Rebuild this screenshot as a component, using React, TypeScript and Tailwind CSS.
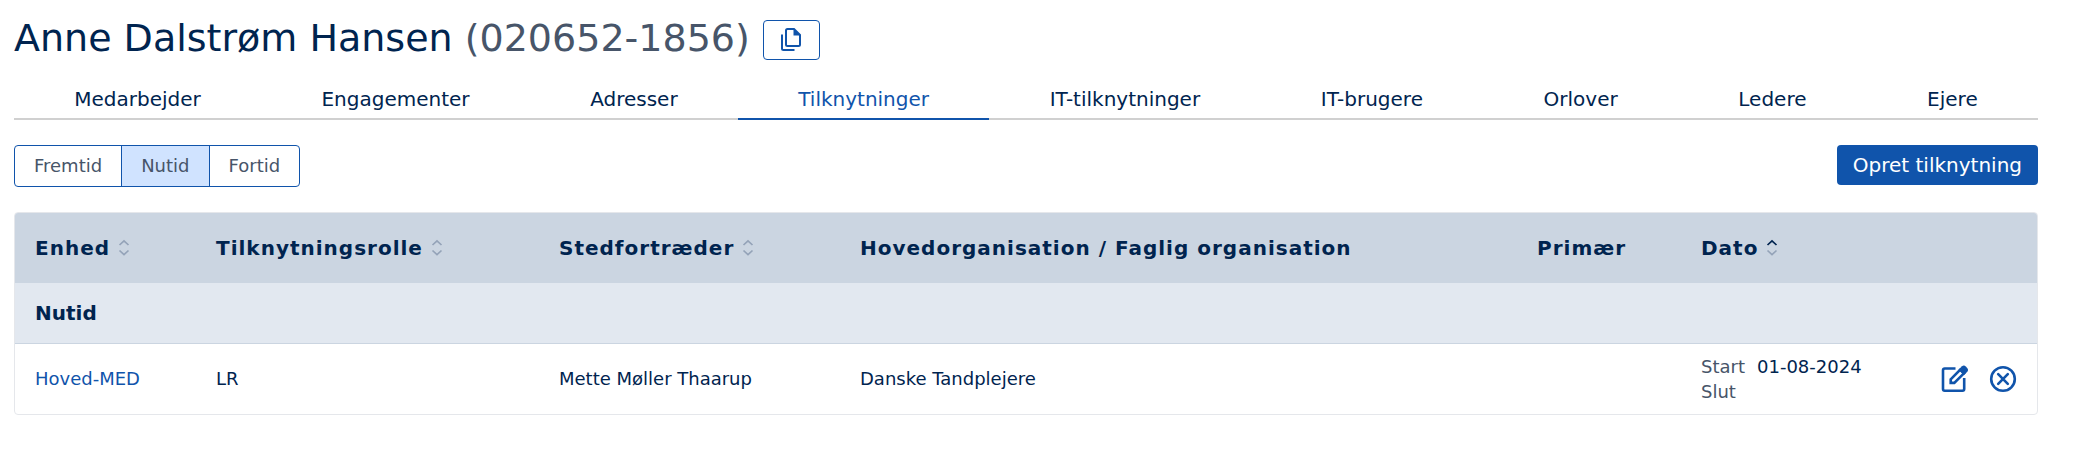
import React from "react";

const tabs = [
  "Medarbejder",
  "Engagementer",
  "Adresser",
  "Tilknytninger",
  "IT-tilknytninger",
  "IT-brugere",
  "Orlover",
  "Ledere",
  "Ejere",
];

const periods = ["Fremtid", "Nutid", "Fortid"];

type Sort = "none" | "asc";

const columns: { label: string; width: string; sort?: Sort }[] = [
  { label: "Enhed", width: "w-[181px]", sort: "none" },
  { label: "Tilknytningsrolle", width: "w-[343px]", sort: "none" },
  { label: "Stedfortræder", width: "w-[301px]", sort: "none" },
  { label: "Hovedorganisation / Faglig organisation", width: "" },
  { label: "Primær", width: "w-[164px]" },
  { label: "Dato", width: "w-[216px]", sort: "asc" },
];

function CopyIcon() {
  return (
    <svg width="20" height="24" viewBox="0 0 20 24" fill="none" stroke="currentColor" strokeWidth="2" aria-hidden="true">
      <path d="M5 2.500Q5 1 6.500 1H13L19 7V16.500Q19 18 17.500 18H6.500Q5 18 5 16.500Z" />
      <path d="M12.500 0.500V7.500H19.500Z" fill="currentColor" stroke="none" />
      <path d="M1 6.500V20.500Q1 22 2.500 22H13.500" />
    </svg>
  );
}

function SortIcon({ active }: { active: boolean }) {
  return (
    <svg width="12" height="18" viewBox="0 0 12 18" fill="none" strokeWidth="1.700" aria-hidden="true">
      <path d="M1.500 6L6 1.800L10.500 6" className={active ? "stroke-[#00244f]" : "stroke-[#94a3b8]"} />
      <path d="M1.500 11.500L6 15.700L10.500 11.500" className="stroke-[#94a3b8]" />
    </svg>
  );
}

function EditIcon() {
  return (
    <svg width="28" height="28" viewBox="0 0 28 28" fill="none" stroke="currentColor" strokeWidth="2.600" aria-hidden="true">
      <path d="M14.500 3.500H3.700Q2 3.500 2 5.200V24Q2 25.700 3.700 25.700H21.500Q23.200 25.700 23.200 24V13" />
      <path d="M9.700 14.300L19.300 4.700L22.900 8.300L13.300 17.900H9.700Z" />
      <path d="M17.500 4.700L21 1.300Q22.900 -0.200 24.800 1.500L26.200 2.900Q27.800 4.900 26.300 6.800L22.900 10.200Z" fill="currentColor" stroke="none" />
    </svg>
  );
}

function EndIcon() {
  return (
    <svg width="28" height="28" viewBox="0 0 28 28" fill="none" stroke="currentColor" strokeWidth="2.600" aria-hidden="true">
      <circle cx="14" cy="14" r="11.800" />
      <path d="M9.200 9.200L18.800 18.800M18.800 9.200L9.200 18.800" strokeLinecap="round" />
    </svg>
  );
}

export default function App() {
  return (
    <main className="pt-4 pr-[38px] pl-3.5 font-['Verdana','DejaVu_Sans',sans-serif] text-[#00244f]">
      <header className="flex items-end gap-[13px]">
        <h1 className="text-[38px] leading-[44px]">
          Anne Dalstrøm Hansen <span className="text-[#475569]">(020652-1856)</span>
        </h1>
        <button type="button" aria-label="Kopiér" className="flex h-10 w-[57px] items-center justify-center rounded border border-[#1054ab] text-[#1054ab]">
          <CopyIcon />
        </button>
      </header>

      <nav className="mt-6 flex">
        {tabs.map((tab) => (
          <a
            key={tab}
            href="#"
            aria-current={tab === "Tilknytninger" ? "page" : undefined}
            className={
              "flex-auto border-b-2 pb-1 text-center text-xl leading-[30px] " +
              (tab === "Tilknytninger" ? "border-[#1054ab] text-[#1054ab]" : "border-[#d0d0d0]")
            }
          >
            {tab}
          </a>
        ))}
      </nav>

      <div className="mt-[25px] flex items-start justify-between">
        <div className="flex divide-x divide-[#1054ab] overflow-hidden rounded border border-[#1054ab]">
          {periods.map((period) => (
            <button
              key={period}
              type="button"
              aria-pressed={period === "Nutid"}
              className={"h-10 px-[19px] text-lg text-[#475569] " + (period === "Nutid" ? "bg-[#d0e3ff]" : "")}
            >
              {period}
            </button>
          ))}
        </div>
        <button type="button" className="h-10 rounded bg-[#1054ab] px-4 text-xl text-white">
          Opret tilknytning
        </button>
      </div>

      <div className="mt-[25px] overflow-hidden rounded border border-gray-200">
        <table className="w-full min-w-[1760px] table-fixed text-left">
          <thead className="bg-[#cbd5e1]">
            <tr className="h-[70px]">
              {columns.map((column) => (
                <th key={column.label} scope="col" className={"px-5 text-xl font-bold tracking-wider whitespace-nowrap " + column.width}>
                  {column.sort ? (
                    <button type="button" className="flex items-center gap-2 tracking-wider">
                      {column.label}
                      <SortIcon active={column.sort === "asc"} />
                    </button>
                  ) : (
                    column.label
                  )}
                </th>
              ))}
              <th aria-label="Handlinger" className="w-[140px]" />
            </tr>
          </thead>
          <tbody className="text-lg">
            <tr className="h-[60px] border-b border-[#cbd5e1] bg-[#e2e8f0]">
              <th colSpan={7} scope="rowgroup" className="px-5 text-xl font-bold">
                Nutid
              </th>
            </tr>
            <tr className="h-[71px]">
              <td className="px-5">
                <a href="#" className="text-[#1054ab]">Hoved-MED</a>
              </td>
              <td className="px-5">LR</td>
              <td className="px-5 whitespace-nowrap">Mette Møller Thaarup</td>
              <td className="px-5">Danske Tandplejere</td>
              <td />
              <td className="px-5 leading-[25px] whitespace-nowrap">
                <dl className="grid grid-cols-[max-content_1fr] gap-x-3">
                  <dt className="text-[#475569]">Start</dt>
                  <dd>01-08-2024</dd>
                  <dt className="text-[#475569]">Slut</dt>
                  <dd />
                </dl>
              </td>
              <td className="px-5">
                <div className="flex justify-end gap-5 text-[#1054ab]">
                  <button type="button" aria-label="Rediger"><EditIcon /></button>
                  <button type="button" aria-label="Afslut"><EndIcon /></button>
                </div>
              </td>
            </tr>
          </tbody>
        </table>
      </div>
    </main>
  );
}
